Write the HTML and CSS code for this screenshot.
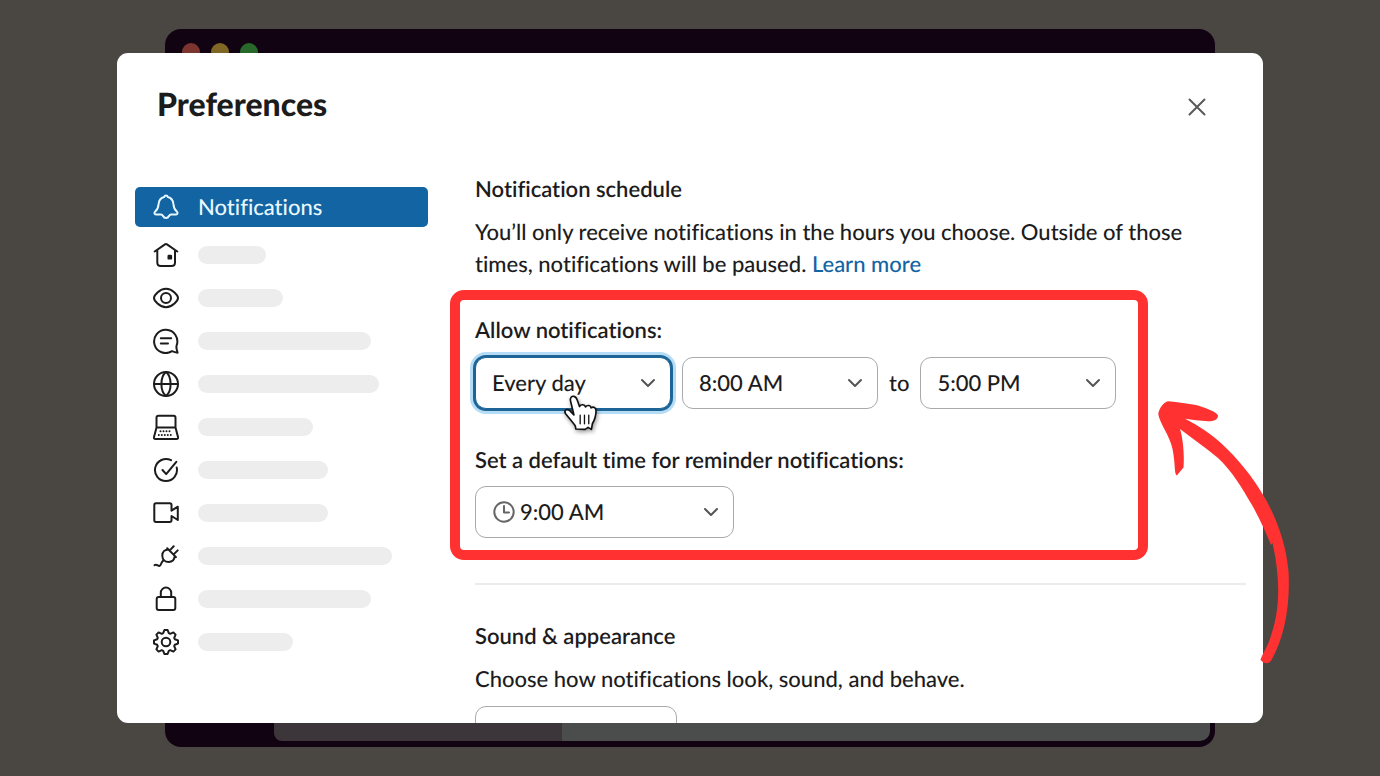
FILE: index.html
```html
<!DOCTYPE html>
<html lang="en">
<head>
<meta charset="utf-8">
<meta name="viewport" content="width=device-width, initial-scale=1">
<title>Preferences</title>
<link rel="stylesheet" href="styles.css">
</head>
<body>
<div class="stage">
  <div class="app-window" aria-hidden="true">
    <div class="titlebar"><span class="dot dot-red"></span><span class="dot dot-yellow"></span><span class="dot dot-green"></span></div>
    <div class="app-body"><div></div><div class="pane pane-list"></div><div class="pane pane-content"></div></div>
  </div>

  <div class="dialog" role="dialog" aria-labelledby="title">
    <header class="dialog-header">
      <h1 class="title" id="title">Preferences</h1>
      <button class="close" type="button" aria-label="Close">
        <svg width="18" height="18" viewBox="0 0 18 18"><path d="M1.5 1.5l15 15M16.5 1.5l-15 15"/></svg>
      </button>
    </header>

    <div class="dialog-body">
      <nav class="sidebar" aria-label="Sections">
        <button class="item item-active" type="button">
          <svg class="icon" viewBox="0 0 26 26"><path d="M13 1.5c1 0 1.500.5 1.800 1.500 3.700.8 5.400 3.600 5.700 7.500.2 3.500.9 5 3.300 7 1.300 1.200.8 3-.8 3H18c-1.300 0-1.400.4-2 1.500-1.300 2.600-4.700 2.600-6 0-.6-1.100-.7-1.500-2-1.500H3c-1.600 0-2.100-1.800-.8-3 2.400-2 3.100-3.500 3.300-7 .3-3.900 2-6.700 5.700-7.500.3-1 .8-1.500 1.800-1.500z"/></svg>
          <span>Notifications</span>
        </button>
        <button class="item" type="button" aria-label="Home">
          <svg class="icon" viewBox="0 0 26 26"><path d="M1.700 9.500L12 2.400q1-.7 2 0L24.300 9.500M4.300 8v12.500q0 3.500 3.500 3.500h10.700q3.500 0 3.500-3.500V8"/><rect class="solid" x="14.500" y="12.800" width="4.600" height="4.800" rx="1.200"/></svg>
          <span class="bar" style="width:68px"></span>
        </button>
        <button class="item" type="button" aria-label="Appearance">
          <svg class="icon" viewBox="0 0 26 26"><path d="M1 13c0-2.500 5.400-9.200 12-9.200S25 10.500 25 13s-5.400 9.200-12 9.200S1 15.500 1 13z"/><circle cx="13" cy="13" r="5"/></svg>
          <span class="bar" style="width:85px"></span>
        </button>
        <button class="item" type="button" aria-label="Messages">
          <svg class="icon" viewBox="0 0 26 26"><path d="M19 23.200A11.600 11.600 0 1 1 23.600 17.500c-.4 1.500-.2 2.500.1 3.800l.9 3.400c-2-.1-3.700-.6-5.600-1.500zM7.800 10.300h10.400M7.800 15.500h7.200"/></svg>
          <span class="bar" style="width:173px"></span>
        </button>
        <button class="item" type="button" aria-label="Language">
          <svg class="icon" viewBox="0 0 26 26"><circle cx="13" cy="13" r="12"/><path d="M1 13h24M13 1c-2.500 2-4.600 7-4.600 12s2.100 10 4.600 12c2.500-2 4.600-7 4.600-12S15.500 3 13 1z"/></svg>
          <span class="bar" style="width:181px"></span>
        </button>
        <button class="item" type="button" aria-label="Accessibility">
          <svg class="icon" viewBox="0 0 26 26"><path d="M3.500 13.500V3.700q0-2 2-2h15q2 0 2 2v9.800zM3.500 13.500L1 23q-.5 2 1.500 2h21q2 0 1.500-2l-2.500-9.500"/><path class="keys" d="M7.500 17.200h12M5.800 21h15"/></svg>
          <span class="bar" style="width:115px"></span>
        </button>
        <button class="item" type="button" aria-label="Mark as read">
          <svg class="icon" viewBox="0 0 26 26"><path d="M18 3.200A11 11 0 1 0 23.700 10.500M9.500 13l3.700 4.100L23.300 4.800"/></svg>
          <span class="bar" style="width:130px"></span>
        </button>
        <button class="item" type="button" aria-label="Audio and video">
          <svg class="icon" viewBox="0 0 26 26"><path d="M18.500 10.700V5q0-1.700-1.700-1.700H3Q1.300 3.300 1.300 5v15.300Q1.300 22 3 22h13.800q1.700 0 1.700-1.700V16l6.300 4V6.700l-6.300 4"/></svg>
          <span class="bar" style="width:130px"></span>
        </button>
        <button class="item" type="button" aria-label="Connected accounts">
          <svg class="icon" viewBox="0 0 26 26"><path d="M14.200 5.300l8.800 8.800M17.500 6.600l3.200-3.300M21.400 10.600l3.300-3.200M15.300 6.500c-3 .1-6 2-6 6 0 3.900 2.700 6.500 6.400 6.500 3.500 0 5.700-2.300 6-5.800M10.900 17l-1.500 1.500c-1.700 1.700-.9 4-3.100 4.400-1.400.2-2.700-2.200-4.800-.7"/></svg>
          <span class="bar" style="width:194px"></span>
        </button>
        <button class="item" type="button" aria-label="Privacy">
          <svg class="icon" viewBox="0 0 26 26"><rect x="3.700" y="11" width="18.600" height="13" rx="2"/><path d="M7.800 11V6.800a5.200 5.200 0 0 1 10.400 0V11"/></svg>
          <span class="bar" style="width:173px"></span>
        </button>
        <button class="item" type="button" aria-label="Advanced">
          <svg class="icon" viewBox="-13 -13 26 26"><path d="M-2.800-8.800L-1.600-12H1.600L2.800-8.800 4.200-8.200 7.400-9.600 9.600-7.400 8.200-4.200 8.800-2.800 12-1.600V1.600L8.800 2.800 8.200 4.200 9.600 7.400 7.400 9.600 4.200 8.200 2.800 8.800 1.600 12H-1.600L-2.800 8.800-4.200 8.200-7.400 9.600-9.600 7.400-8.200 4.200-8.800 2.800-12 1.600V-1.600L-8.800-2.800-8.200-4.200-9.600-7.400-7.400-9.600-4.200-8.200z"/><circle r="4.300"/></svg>
          <span class="bar" style="width:95px"></span>
        </button>
      </nav>

      <main class="content">
        <h2 class="heading">Notification schedule</h2>
        <p class="text">You’ll only receive notifications in the hours you choose. Outside of those times, notifications will be paused. <a class="link" href="#">Learn more</a></p>

        <section class="schedule">
          <label class="heading" for="days">Allow notifications:</label>
          <div class="row">
            <div class="select-box">
              <select class="select select-focus" id="days"><option>Every day</option></select>
              <svg class="chevron" viewBox="0 0 16 10"><path d="M2 2l6 6 6-6"/></svg>
              <svg class="pointer" viewBox="364 340 112 112"><path class="hand" d="M390 362C387 351 394 346 400 347 406 348 408 352 410 358L417 378C421 370 433 371 435 379 441 372 451 374 452 382 459 377 467 381 467 391 467 407 462 420 456 430L453 447 443 441 434 447 406 446 404 436C396 425 386 414 375 400 369 391 377 384 386 389L400 403Z"/><path class="knuckles" d="M419 404v26M432 404v26M445 404v26"/></svg>
            </div>
            <div class="select-box">
              <select class="select" aria-label="From"><option>8:00 AM</option></select>
              <svg class="chevron" viewBox="0 0 16 10"><path d="M2 2l6 6 6-6"/></svg>
            </div>
            <span>to</span>
            <div class="select-box">
              <select class="select" aria-label="To"><option>5:00 PM</option></select>
              <svg class="chevron" viewBox="0 0 16 10"><path d="M2 2l6 6 6-6"/></svg>
            </div>
          </div>
          <label class="heading" for="reminder">Set a default time for reminder notifications:</label>
          <div class="select-box select-box-wide">
            <select class="select select-with-icon" id="reminder"><option>9:00 AM</option></select>
            <svg class="clock" viewBox="0 0 22 22"><circle cx="11" cy="11" r="9.700"/><path d="M11 5v6.500h5"/></svg>
            <svg class="chevron" viewBox="0 0 16 10"><path d="M2 2l6 6 6-6"/></svg>
          </div>
        </section>

        <hr class="divider">

        <h2 class="heading">Sound &amp; appearance</h2>
        <p class="text" id="sound-text">Choose how notifications look, sound, and behave.</p>
        <div class="select-box select-box-sound">
          <select class="select" aria-labelledby="sound-text"><option></option></select>
        </div>
      </main>
    </div>
  </div>

  <svg class="arrow" viewBox="1155 395 140 275" aria-hidden="true"><path d="M1158.300 414C1159 408 1164 402 1168 401.200 1178 402 1188 403.500 1196 405 1205 407.500 1217 412 1218 415.500 1218 420 1213 421.500 1208 421.300 1200 421 1192 419.800 1185 418.800 1199 426 1211 434 1222 444 1238 459 1252 476 1262.500 494 1276 516 1286 543 1288.500 571 1290.500 607 1284 637 1272 659 1270 664 1266 663.500 1263.500 662.500L1260.500 660C1262 654 1268 647 1271.500 634 1281 606 1279.500 574 1272.500 543L1271 545C1266 533 1260 519 1252 505 1242 488 1232 471 1218 458 1206 448 1192 438 1180 429 1183 439 1184.500 454 1183.500 467.500L1176.800 475.500C1174 474 1175.500 463 1172.500 449 1170 436 1159 422 1158.300 414Z"/></svg>
</div>
</body>
</html>
```

FILE: styles.css
```css
* { box-sizing: border-box; }

body {
  margin: 0;
  background: #4a4742;
  color: #1d1c1d;
  font: 500 22px/32px Lato, "Liberation Sans", sans-serif;
  font-variant-ligatures: none;
  text-rendering: geometricPrecision;
}

h1, h2, p { margin: 0; }
button, select {
  font: inherit;
  font-variant-ligatures: inherit;
  text-rendering: inherit;
  color: inherit;
}
svg { fill: none; stroke: currentColor; stroke-linecap: round; stroke-linejoin: round; }

.stage {
  position: relative;
  display: flex;
  height: 100vh;
  padding: 53px 117px;
  overflow: hidden;
}

/* Dimmed application window behind the dialog */
.app-window {
  position: absolute;
  inset: 29px 165px;
  display: flex;
  flex-direction: column;
  padding: 0 5px 6px 0;
  border-radius: 16px;
  background: #120313;
}
.titlebar { display: flex; gap: 11px; padding: 14px 17px; }
.dot { width: 18px; height: 18px; border-radius: 50%; }
.dot-red { background: #7b352e; }
.dot-yellow { background: #806725; }
.dot-green { background: #28682a; }
.app-body { flex: 1; display: grid; grid-template-columns: 109px 288px 1fr; }
.pane-list { background: #3c363b; border-bottom-left-radius: 8px; }
.pane-content { background: #4b4d4c; border-bottom-right-radius: 10px; }

.dialog {
  position: relative;
  flex: 1;
  display: flex;
  flex-direction: column;
  overflow: hidden;
  border-radius: 11px;
  background: #fff;
}
.dialog-header {
  display: flex;
  align-items: center;
  justify-content: space-between;
  padding: 31px 54px 0 40px;
}
.title { font-size: 32px; line-height: 40px; font-weight: 900; }
.close {
  display: grid;
  place-items: center;
  width: 24px;
  height: 40px;
  padding: 6px 0 0;
  border: 0;
  background: none;
  color: #5a5a5a;
}
.close svg { stroke-width: 2; }

.dialog-body {
  display: grid;
  grid-template-columns: 293px minmax(0, 1fr);
  gap: 47px;
  padding: 49px 17px 0 18px;
}

.sidebar { display: flex; flex-direction: column; padding-top: 14px; }
.item {
  display: flex;
  align-items: center;
  gap: 19px;
  height: 43px;
  padding: 0 18px;
  border: 0;
  border-radius: 5px;
  background: none;
}
.item-active { height: 40px; margin-bottom: 6px; background: #1264a3; color: #e8f8ff; }
.icon { width: 26px; height: 26px; flex: none; stroke-width: 2; }
.icon .solid { fill: currentColor; stroke: none; }
.icon .keys { stroke-width: 2; stroke-dasharray: 0 3; }
.bar { height: 18px; border-radius: 9px; background: #ededed; }

.heading { display: block; font-size: 22px; line-height: 32px; font-weight: 600; }
.text { max-width: 720px; margin-top: 11px; }
.link { color: #1264a3; text-decoration: none; }

.schedule {
  margin: 10px 98px 0 -25px;
  padding: 14px 15px 12px;
  border: 10px solid #ff3131;
  border-radius: 14px;
}
.row { display: flex; align-items: center; gap: 11px; margin: 11px 0 35px; }

.select-box { position: relative; width: 196px; }
.select-box-wide { width: 259px; margin-top: 10px; }
.select-box-sound { width: 202px; margin-top: 11px; }
.select {
  display: block;
  width: 100%;
  height: 52px;
  padding: 0 16px;
  border: 1px solid #aaa;
  border-radius: 11px;
  background: #fff;
  appearance: none;
}
.select-focus {
  border: 1px solid #1d6497;
  box-shadow: 0 0 0 2px #1d6497, 0 0 0 5px #b5dcf5;
}
.select-with-icon { padding-left: 44px; }
.chevron {
  position: absolute;
  top: 21px;
  right: 15px;
  width: 16px;
  height: 10px;
  color: #555;
  stroke-width: 2;
  pointer-events: none;
}
.clock {
  position: absolute;
  top: 15px;
  left: 18px;
  width: 22px;
  height: 22px;
  color: #666;
  stroke-width: 2;
  pointer-events: none;
}
.pointer {
  position: absolute;
  top: 37px;
  left: 87px;
  width: 37px;
  height: 37px;
  color: #111;
  overflow: visible;
  filter: drop-shadow(1px 2px 2px rgba(0, 0, 0, 0.4));
  pointer-events: none;
}
.hand { fill: #fff; stroke-width: 5; }
.knuckles { stroke-width: 4; }

.divider { height: 2px; margin: 23px 0 35px; border: 0; background: #ececec; }

.arrow {
  position: absolute;
  top: 395px;
  right: 85px;
  width: 140px;
  height: 275px;
  fill: #ff3131;
  stroke: none;
  pointer-events: none;
}
```
